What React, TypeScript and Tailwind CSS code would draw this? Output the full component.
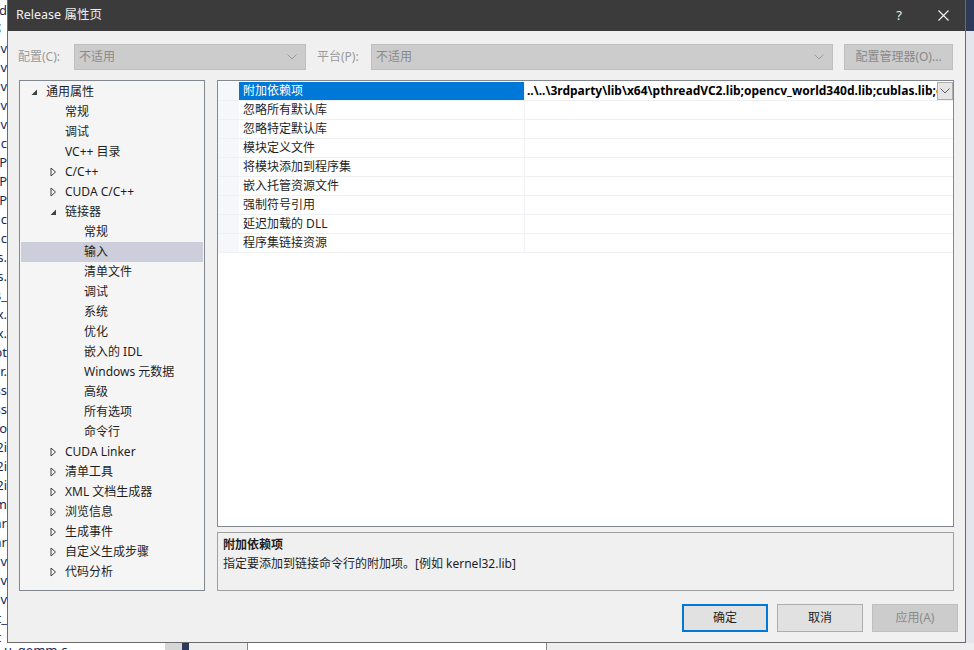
import React from 'react';

type TreeItem = { label: string; level: 0 | 1 | 2; arrow?: 'open' | 'closed'; selected?: boolean };

const treeItems: TreeItem[] = [
  { label: '通用属性', level: 0, arrow: 'open' },
  { label: '常规', level: 1 },
  { label: '调试', level: 1 },
  { label: 'VC++ 目录', level: 1 },
  { label: 'C/C++', level: 1, arrow: 'closed' },
  { label: 'CUDA C/C++', level: 1, arrow: 'closed' },
  { label: '链接器', level: 1, arrow: 'open' },
  { label: '常规', level: 2 },
  { label: '输入', level: 2, selected: true },
  { label: '清单文件', level: 2 },
  { label: '调试', level: 2 },
  { label: '系统', level: 2 },
  { label: '优化', level: 2 },
  { label: '嵌入的 IDL', level: 2 },
  { label: 'Windows 元数据', level: 2 },
  { label: '高级', level: 2 },
  { label: '所有选项', level: 2 },
  { label: '命令行', level: 2 },
  { label: 'CUDA Linker', level: 1, arrow: 'closed' },
  { label: '清单工具', level: 1, arrow: 'closed' },
  { label: 'XML 文档生成器', level: 1, arrow: 'closed' },
  { label: '浏览信息', level: 1, arrow: 'closed' },
  { label: '生成事件', level: 1, arrow: 'closed' },
  { label: '自定义生成步骤', level: 1, arrow: 'closed' },
  { label: '代码分析', level: 1, arrow: 'closed' },
];

const props = [
  '附加依赖项',
  '忽略所有默认库',
  '忽略特定默认库',
  '模块定义文件',
  '将模块添加到程序集',
  '嵌入托管资源文件',
  '强制符号引用',
  '延迟加载的 DLL',
  '程序集链接资源',
];

// bits of the code editor peeking out behind the dialog
const editorLines = [
  'd', '阝', 'v', 'v', 'v', 'v', 'v', 'c', 'IP', 'IP', 'IP', 'c', 'c', 's.', 's.', 's_', 'x.', 'x.',
  'pt', 'r.', 'ss', 'ss', 'co', '2i', '2i', '2i', 'm', 'ar', 'ar', 'av', 'av', 'av', 't_', 't_',
];

const levelPad = ['pl-[10px]', 'pl-[29px]', 'pl-[48px]'];

function Chevron({ color = '#9a9a9a' }: { color?: string }) {
  return (
    <svg width="10" height="6" viewBox="0 0 10 6">
      <path d="M0.5 0.5 L5 5 L9.5 0.5" fill="none" stroke={color} strokeWidth="1" />
    </svg>
  );
}

function Arrow({ kind }: { kind?: 'open' | 'closed' }) {
  if (kind === 'open') {
    return (
      <svg width="7" height="7" viewBox="0 0 7 7">
        <polygon points="6,0.5 6,6 0.5,6" fill="#404040" />
      </svg>
    );
  }
  if (kind === 'closed') {
    return (
      <svg width="7" height="10" viewBox="0 0 7 10">
        <path d="M1 1 L5.5 5 L1 9 Z" fill="none" stroke="#404040" strokeWidth="1" />
      </svg>
    );
  }
  return null;
}

function ComboBox({ width }: { width: string }) {
  return (
    <div className={`${width} h-[26px] shrink-0 flex items-center justify-between bg-[#cccccc] border border-[#bfbfbf] pl-[4px] pr-[8px]`}>
      <span className="text-[#8a8a8a]">不适用</span>
      <Chevron />
    </div>
  );
}

export default function App() {
  return (
    <div className="w-[974px] h-[650px] overflow-hidden flex flex-col bg-white text-[12px] font-['Noto_Sans','Noto_Sans_CJK_SC',sans-serif] text-[#1e1e1e]">
      <div className="flex h-[643px] shrink-0">
        {/* 后面的编辑器 */}
        <div className="w-[7px] shrink-0 overflow-hidden bg-white pt-[1px]">
          {editorLines.map((t, i) => (
            <div key={i} className="h-[19px] flex justify-end leading-[19px] text-[13px] text-[#1b2a55] whitespace-nowrap">
              {t}
            </div>
          ))}
        </div>

        {/* 对话框 */}
        <div className="w-[959px] shrink-0 flex flex-col border-x border-b border-[#6b6b6b] bg-[#f0f0f0]">
          <div className="h-[31px] shrink-0 flex items-center bg-[#3b3b3b] text-[#f0f0f0] pl-[8px]">
            <span className="text-[12.5px]">Release 属性页</span>
            <span className="ml-auto mr-[36px] text-[13px]">?</span>
            <svg className="mr-[16px]" width="11" height="11" viewBox="0 0 11 11">
              <path d="M0.5 0.5 L10.5 10.5 M10.5 0.5 L0.5 10.5" stroke="#f0f0f0" strokeWidth="1.2" />
            </svg>
          </div>

          {/* 配置 / 平台 */}
          <div className="h-[26px] mt-[13px] flex items-center pl-[10px] pr-[12px]">
            <span className="w-[56px] shrink-0 text-[#9a9a9a]">配置(C):</span>
            <ComboBox width="w-[232px]" />
            <span className="w-[54px] shrink-0 ml-[11px] text-[#9a9a9a]">平台(P):</span>
            <ComboBox width="w-[462px]" />
            <div className="ml-auto w-[109px] shrink-0 h-[26px] flex items-center justify-center bg-[#cccccc] border border-[#bfbfbf] text-[#8a8a8a]">
              配置管理器(O)...
            </div>
          </div>

          {/* 主区域 */}
          <div className="h-[511px] mt-[10px] flex pl-[11px] pr-[11px] gap-[12px]">
            <div className="w-[186px] shrink-0 border border-[#828790] bg-[#f5f5f5] p-[1px]">
              {treeItems.map((it, i) => (
                <div
                  key={i}
                  className={`h-[20px] flex items-center ${levelPad[it.level]} ${it.selected ? 'bg-[#cccedb]' : ''}`}
                >
                  <div className="w-[15px] shrink-0 flex items-center">
                    <Arrow kind={it.arrow} />
                  </div>
                  <span className="leading-[20px] whitespace-nowrap">{it.label}</span>
                </div>
              ))}
            </div>

            <div className="flex-1 min-w-0 flex flex-col gap-[5px]">
              <div className="h-[447px] shrink-0 border border-[#828790] bg-white pt-[1px]">
                {props.map((p, i) => (
                  <div key={i} className="h-[19px] flex border-b border-[#eef0f3]">
                    <div className="w-[21px] shrink-0 bg-[#f5f7fa]" />
                    <div
                      className={`w-[286px] shrink-0 pl-[4px] leading-[18px] border-r border-[#eef0f3] whitespace-nowrap ${
                        i === 0 ? 'bg-[#0078d7] text-white' : ''
                      }`}
                    >
                      {p}
                    </div>
                    <div className="flex-1 min-w-0 flex items-center">
                      {i === 0 && (
                        <>
                          <span className="flex-1 min-w-0 overflow-hidden whitespace-nowrap pl-[2px] leading-[18px] font-bold text-[12px] text-black">
                            ..\..\3rdparty\lib\x64\pthreadVC2.lib;opencv_world340d.lib;cublas.lib;cudart.lib
                          </span>
                          <div className="w-[16px] shrink-0 h-[18px] flex items-center justify-center bg-[#e5e5e5] border border-[#acacac]">
                            <Chevron color="#606060" />
                          </div>
                        </>
                      )}
                    </div>
                  </div>
                ))}
              </div>
              <div className="flex-1 border border-[#a0a0a0] bg-[#f0f0f0] px-[5px] pt-[2px]">
                <div className="font-bold leading-[19px]">附加依赖项</div>
                <div className="leading-[19px]">指定要添加到链接命令行的附加项。[例如 kernel32.lib]</div>
              </div>
            </div>
          </div>

          {/* 按钮 */}
          <div className="mt-[13px] flex justify-end gap-[9px] pr-[7px]">
            <div className="w-[86px] h-[28px] flex items-center justify-center bg-[#e1e1e1] border-2 border-[#0078d7]">确定</div>
            <div className="w-[86px] h-[28px] flex items-center justify-center bg-[#e1e1e1] border border-[#adadad]">取消</div>
            <div className="w-[86px] h-[28px] flex items-center justify-center bg-[#cccccc] border border-[#bfbfbf] text-[#8a8a8a]">应用(A)</div>
          </div>
        </div>

        <div className="flex-1 flex flex-col">
          <div className="h-[31px] bg-[#2d3a58]" />
          <div className="flex-1 bg-[#e4e6eb]" />
        </div>
      </div>

      {/* 底部编辑器标签 */}
      <div className="flex-1 flex overflow-hidden text-[13px] leading-[14px]">
        <div className="w-[165px] shrink-0 overflow-hidden pl-[4px] text-[#1b2a55] whitespace-nowrap">u_gemm.c</div>
        <div className="w-[17px] shrink-0 bg-[#d6d6d6]" />
        <div className="w-[7px] shrink-0 bg-[#2d3a58]" />
        <div className="w-[59px] shrink-0 bg-[#eeeeee] border-r border-[#888]" />
        <div className="w-[298px] shrink-0 bg-white" />
        <div className="flex-1 bg-[#eeeeee] border-l border-[#888]" />
      </div>
    </div>
  );
}
